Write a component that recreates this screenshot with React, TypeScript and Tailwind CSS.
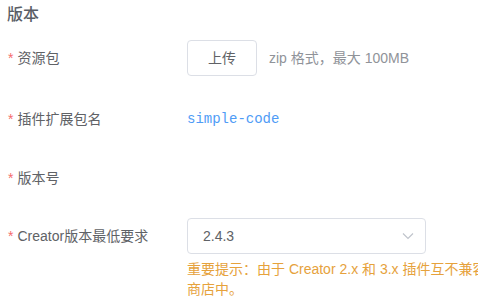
import React from "react";

const font = { fontFamily: '"Liberation Sans", "Noto Sans CJK SC", sans-serif' };

function Label({ text }: { text: string }) {
  return (
    <div className="w-[187px] shrink-0 pl-2 flex items-center text-sm text-[#606266]">
      <span className="text-[#f56c6c] mr-1">*</span>
      <span>{text}</span>
    </div>
  );
}

export default function App() {
  return (
    <div
      className="w-[478px] h-[303px] overflow-hidden bg-white pt-[3px]"
      style={font}
    >
      <div className="pl-[7px] h-6 leading-6 text-base font-medium text-[#5a5e66]">版本</div>

      <div className="mt-[13px] flex h-9 items-center">
        <Label text="资源包" />
        <button className="h-9 w-[70px] rounded border border-[#dcdfe6] bg-white text-sm text-[#606266]">
          上传
        </button>
        <span className="ml-3 text-sm text-[#909399]">zip 格式，最大 100MB</span>
      </div>

      <div className="mt-[25px] flex h-9 items-center">
        <Label text="插件扩展包名" />
        <span
          className="text-sm text-[#4f9cf6]"
          style={{ fontFamily: '"Liberation Mono", "DejaVu Sans Mono", monospace' }}
        >
          simple-code
        </span>
      </div>

      <div className="mt-[23px] flex h-9 items-center">
        <Label text="版本号" />
      </div>

      <div className="mt-[22px] flex">
        <Label text="Creator版本最低要求" />
        <div className="flex flex-col">
          <div className="flex h-9 w-[239px] items-center justify-between rounded border border-[#dcdfe6] pl-[15px] pr-[11px] text-sm text-[#606266]">
            <span>2.4.3</span>
            <svg width="12" height="8" viewBox="0 0 12 8" fill="none">
              <path d="M1 1.5 L6 6.5 L11 1.5" stroke="#c0c4cc" strokeWidth="1.2" />
            </svg>
          </div>
        </div>
      </div>
      <div className="mt-[5px] pl-[187px] text-sm leading-5 text-[#e6a23c] whitespace-nowrap">
        <div>重要提示：由于 Creator 2.x 和 3.x 插件互不兼容，请选择正确的版本，以免插件无法在</div>
        <div>商店中。</div>
      </div>
    </div>
  );
}
